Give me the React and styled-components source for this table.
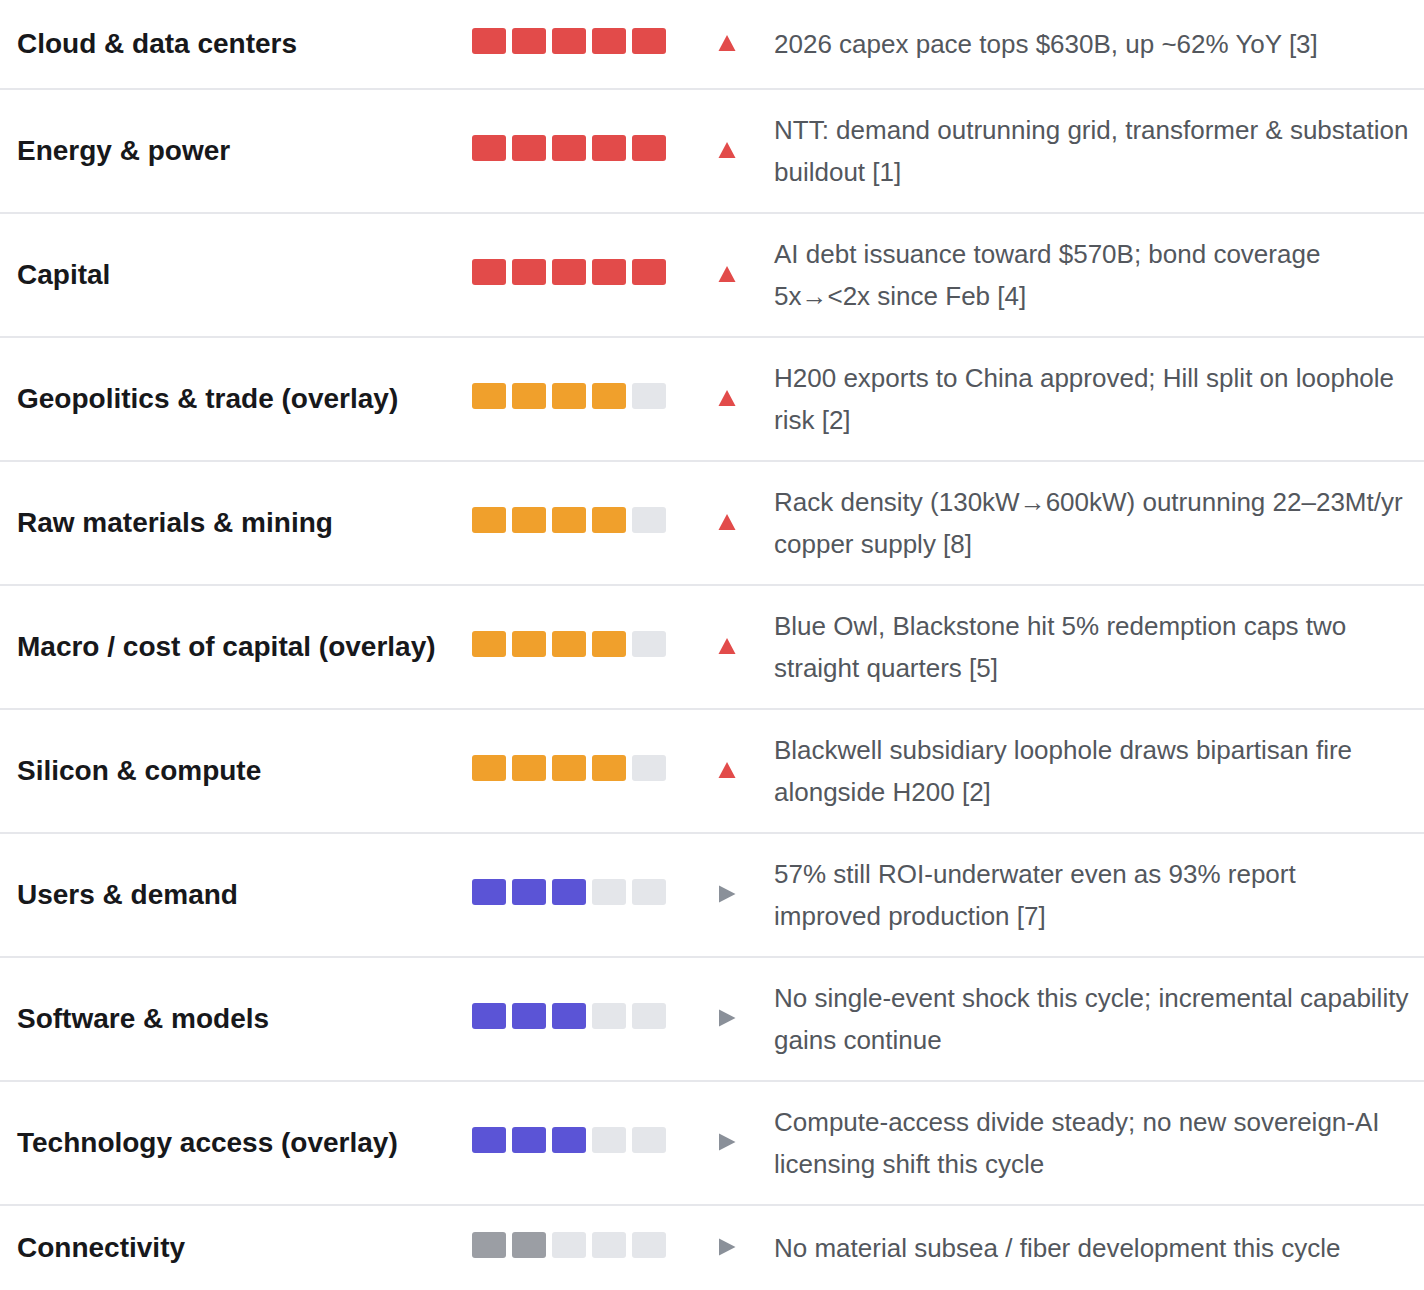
import React from "react";
import styled, { createGlobalStyle } from "styled-components";

const GlobalStyle = createGlobalStyle`
  html, body { margin: 0; padding: 0; background: #ffffff; }
  body { font-family: "Liberation Sans", Arial, sans-serif; }
  * { box-sizing: border-box; }
`;

const Table = styled.div`
  width: 1424px;
  display: flex;
  flex-direction: column;
`;

const Row = styled.div`
  display: grid;
  grid-template-columns: 455px 194px 108px 635px;
  align-items: center;
  min-height: ${(p) => (p.$first ? "90px" : "86px")};
  padding: 19px 0 19px 17px;
  border-bottom: 2px solid #e6e7eb;
`;

const Label = styled.div`
  font-size: 28px;
  font-weight: 700;
  color: #17181b;
  line-height: 1.2;
  white-space: nowrap;
`;

const Bars = styled.div`
  display: flex;
  gap: 6px;
  margin-bottom: 6px;
`;

const Bar = styled.span`
  display: block;
  width: 34px;
  height: 26px;
  border-radius: 3px;
  background: ${(p) => p.$color};
`;

const TrendCell = styled.div`
  padding-left: 52px;
  display: flex;
  align-items: center;
  margin-bottom: 2px;
`;

const Desc = styled.div`
  font-size: 26px;
  line-height: 42px;
  color: #53575d;
`;

const COLORS = {
  red: "#e24b4a",
  orange: "#f0a02c",
  purple: "#5b54d6",
  gray: "#9b9ea4",
};
const EMPTY = "#e4e6ea";

const Trend = ({ dir }) =>
  dir === "up" ? (
    <svg width="18" height="18" viewBox="0 0 18 18">
      <polygon points="9,1 17.5,17 0.5,17" fill="#e24b4a" />
    </svg>
  ) : (
    <svg width="18" height="18" viewBox="0 0 18 18">
      <polygon points="1,0.5 17.5,9 1,17.5" fill="#8a9099" />
    </svg>
  );

const rows = [
  { label: "Cloud & data centers", n: 5, c: "red", dir: "up", desc: "2026 capex pace tops $630B, up ~62% YoY [3]" },
  { label: "Energy & power", n: 5, c: "red", dir: "up", desc: "NTT: demand outrunning grid, transformer & substation buildout [1]" },
  { label: "Capital", n: 5, c: "red", dir: "up", desc: "AI debt issuance toward $570B; bond coverage 5x\u2192<2x since Feb [4]" },
  { label: "Geopolitics & trade (overlay)", n: 4, c: "orange", dir: "up", desc: "H200 exports to China approved; Hill split on loophole risk [2]" },
  { label: "Raw materials & mining", n: 4, c: "orange", dir: "up", desc: "Rack density (130kW\u2192600kW) outrunning 22\u201323Mt/yr copper supply [8]" },
  { label: "Macro / cost of capital (overlay)", n: 4, c: "orange", dir: "up", desc: "Blue Owl, Blackstone hit 5% redemption caps two straight quarters [5]" },
  { label: "Silicon & compute", n: 4, c: "orange", dir: "up", desc: "Blackwell subsidiary loophole draws bipartisan fire alongside H200 [2]" },
  { label: "Users & demand", n: 3, c: "purple", dir: "flat", desc: "57% still ROI-underwater even as 93% report improved production [7]" },
  { label: "Software & models", n: 3, c: "purple", dir: "flat", desc: "No single-event shock this cycle; incremental capability gains continue" },
  { label: "Technology access (overlay)", n: 3, c: "purple", dir: "flat", desc: "Compute-access divide steady; no new sovereign-AI licensing shift this cycle" },
  { label: "Connectivity", n: 2, c: "gray", dir: "flat", desc: "No material subsea / fiber development this cycle" },
];

export default function App() {
  return (
    <>
      <GlobalStyle />
      <Table>
        {rows.map((r, idx) => (
          <Row key={r.label} $first={idx === 0}>
            <Label>{r.label}</Label>
            <Bars>
              {[0, 1, 2, 3, 4].map((i) => (
                <Bar key={i} $color={i < r.n ? COLORS[r.c] : EMPTY} />
              ))}
            </Bars>
            <TrendCell>
              <Trend dir={r.dir} />
            </TrendCell>
            <Desc>{r.desc}</Desc>
          </Row>
        ))}
      </Table>
    </>
  );
}
